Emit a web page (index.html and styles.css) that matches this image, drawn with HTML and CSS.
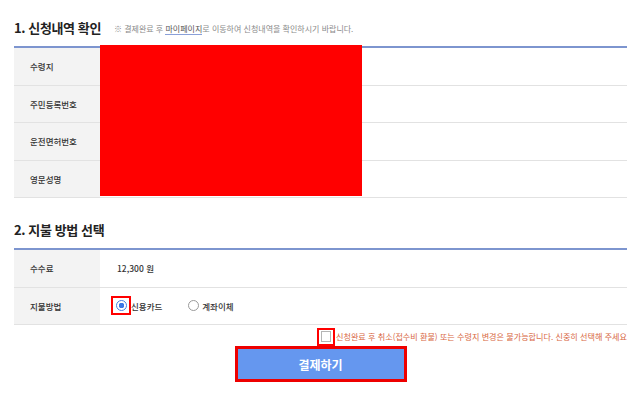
FILE: index.html
```html
<!DOCTYPE html>
<html lang="ko">
<head>
<meta charset="utf-8">
<link rel="stylesheet" href="styles.css">
</head>
<body>
<div class="page">
  <section class="sec sec1">
    <div class="sec-head">
      <h2 class="sec-title">1. 신청내역 확인</h2>
      <p class="sec-note">※ 결제완료 후 <span class="note-link">마이페이지</span>로 이동하여 신청내역을 확인하시기 바랍니다.</p>
    </div>
    <div class="table">
      <div class="row"><div class="th">수령지</div><div class="td"></div></div>
      <div class="row"><div class="th">주민등록번호</div><div class="td"></div></div>
      <div class="row"><div class="th">운전면허번호</div><div class="td"></div></div>
      <div class="row"><div class="th">영문성명</div><div class="td"></div></div>
    </div>
    <div class="redact"></div>
  </section>

  <section class="sec sec2">
    <div class="sec-head">
      <h2 class="sec-title">2. 지불 방법 선택</h2>
    </div>
    <div class="table">
      <div class="row"><div class="th">수수료</div><div class="td">12,300 원</div></div>
      <div class="row">
        <div class="th">지불방법</div>
        <div class="td">
          <label class="opt"><span class="mark-box"><span class="radio on"></span></span>신용카드</label>
          <label class="opt opt2"><span class="radio"></span>계좌이체</label>
        </div>
      </div>
    </div>
    <div class="agree">
      <span class="mark-box cb-box"><span class="checkbox"></span></span>
      <span class="agree-text">신청완료 후 취소(접수비 환불) 또는 수령지 변경은 불가능합니다. 신중히 선택해 주세요</span>
    </div>
    <div class="btn-wrap">
      <button class="pay-btn" type="button">결제하기</button>
    </div>
  </section>
</div>
</body>
</html>
```

FILE: styles.css
```css
* { box-sizing: border-box; }
html, body { margin: 0; padding: 0; background: #fff; }
body {
  font-family: "Noto Sans CJK KR", "Noto Sans", sans-serif;
  color: #333;
  width: 643px;
  height: 400px;
  overflow: hidden;
}
.page { padding: 16px 16px 0 14px; }
.sec { position: relative; }
.sec-head {
  display: flex;
  align-items: center;
  height: 22px;
  gap: 13px;
  margin-bottom: 8px;
}
.sec-title {
  margin: 0;
  font-size: 13px;
  font-weight: 700;
  color: #222;
  letter-spacing: -0.4px;
}
.sec-note {
  margin: 0;
  font-size: 8px;
  color: #8a8a8a;
  padding-top: 2px;
}
.note-link {
  color: #555;
  border-bottom: 1px solid #8aa0d8;
}
.table { border-top: 2px solid #7d95cf; }
.row {
  display: flex;
  height: 37.5px;
  border-bottom: 1px solid #e2e2e2;
}
.th {
  width: 86px;
  background: #f3f3f3;
  padding-left: 16px;
  display: flex;
  align-items: center;
  font-size: 8.5px;
  font-weight: 500;
  color: #333;
}
.td {
  flex: 1;
  display: flex;
  align-items: center;
  padding-left: 17px;
  font-size: 8.5px;
  font-weight: 500;
  color: #333;
}
.redact {
  position: absolute;
  left: 86px;
  top: 29px;
  width: 262px;
  height: 151px;
  background: #ff0000;
}
.sec2 { margin-top: 20px; }
.opt {
  display: flex;
  align-items: center;
  margin-left: -6px;
}
.opt2 { margin-left: 26px; gap: 3px; }
.mark-box {
  display: inline-flex;
  align-items: center;
  justify-content: center;
  border: 2.5px solid #f00;
}
.opt .mark-box { width: 20px; height: 19px; }
.radio {
  display: inline-block;
  width: 11px;
  height: 11px;
  border-radius: 50%;
  border: 1px solid #9a9a9a;
  background: #fff;
}
.radio.on {
  border-color: #4a7fe0;
  background: radial-gradient(circle, #3d78e6 0 2.6px, #fff 3px);
}
.agree {
  display: flex;
  justify-content: flex-end;
  align-items: center;
  margin-top: 2px;
  height: 19px;
}
.cb-box { width: 18px; height: 18px; }
.checkbox {
  display: inline-block;
  width: 10px;
  height: 11px;
  border: 1px solid #b5b5b5;
  background: #fff;
}
.agree-text {
  font-size: 8.1px;
  color: #d8673f;
  margin-left: 1px;
}
.btn-wrap {
  display: flex;
  justify-content: center;
  margin-top: 0;
}
.pay-btn {
  width: 172px;
  height: 36px;
  border: 3px solid #ee0000;
  background: #6597ef;
  color: #fff;
  font-family: "Noto Sans CJK KR", "Noto Sans", sans-serif;
  font-size: 12px;
  font-weight: 700;
  padding: 0;
}
```
